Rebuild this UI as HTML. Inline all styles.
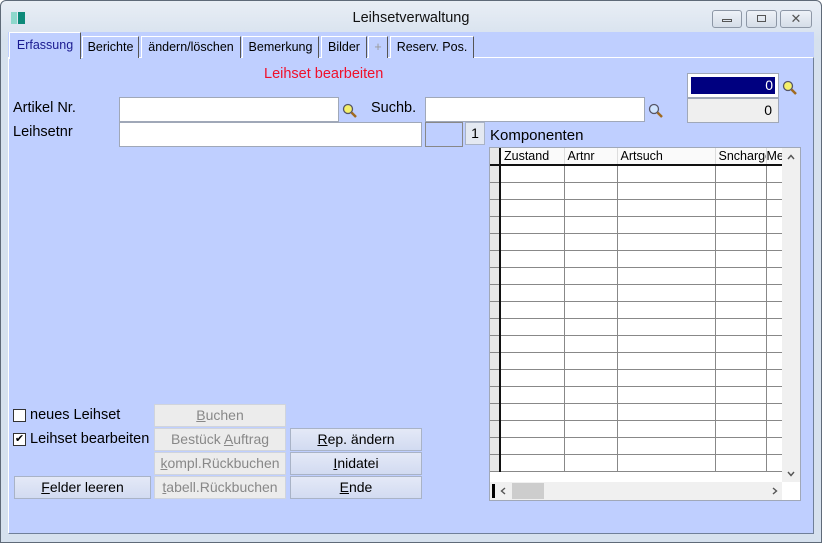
<!DOCTYPE html>
<html><head><meta charset="utf-8"><style>
*{box-sizing:border-box;margin:0;padding:0}
body{width:822px;height:543px;overflow:hidden;font-family:"Liberation Sans",Arial,sans-serif;font-size:13px;background:#fff;position:relative}
.win{position:absolute;left:0;top:0;width:822px;height:543px;background:linear-gradient(#e9eef5,#d6e1ee 40px,#d6e1ee);border:1px solid #5f6a78;border-radius:6px 6px 0 0}
.a{position:absolute}
.panel{left:8px;top:57px;width:806px;height:477px;background:#bfcfff;border:1px solid #6f7f99;border-top:1px solid #fff;border-left:1px solid #fff}
.tabsbg{left:8px;top:32px;width:806px;height:26px;background:#bfcfff}
.tab{position:absolute;top:36px;height:22px;background:#bfcfff;border:1px solid #fff;border-right:1px solid #555;border-bottom:none;font-size:12.5px;text-align:center;line-height:20px}
.inp{position:absolute;background:#fff;border:1px solid #a0a8b8}
.btn{position:absolute;height:23px;border:1px solid #a9b3c6;background:linear-gradient(#e4e9f7,#d2dbf1);text-align:center;line-height:21px;font-size:14px;color:#000}
.dis{background:#ececec;color:#888;border-color:#d0d4dc}
.wb{position:absolute;top:10px;height:18px;border:1px solid #8d97a6;border-radius:3px;background:linear-gradient(#eef2f8,#d5dde8)}
.lbl{position:absolute;font-size:14.5px}
.cb{position:absolute;width:13px;height:13px;border:1px solid #333;background:#fff;font-size:11px;line-height:11px;text-align:center}
.mag{position:absolute;width:16px;height:16px}
table{border-collapse:collapse;table-layout:fixed}
td{border-right:1px solid #888;border-bottom:1px solid #888;height:17px;padding:0}
</style></head><body>
<div class="win"></div>
<div class="a" style="left:11px;top:12px;width:6px;height:12px;background:#8ed8cc"></div>
<div class="a" style="left:18px;top:12px;width:7px;height:12px;background:#0d8a7a"></div>
<div class="a" style="left:0;top:10px;width:822px;text-align:center;font-size:14.5px;color:#111">Leihsetverwaltung</div>
<div class="wb" style="left:712px;width:30px"><div class="a" style="left:9px;top:8px;width:10px;height:3px;border:1px solid #555"></div></div>
<div class="wb" style="left:746px;width:31px"><div class="a" style="left:10px;top:4px;width:9px;height:7px;border:1px solid #555"></div></div>
<div class="wb" style="left:780px;width:32px;text-align:center;font-size:13px;line-height:16px;color:#555">✕</div>
<div class="a tabsbg"></div>
<div class="a panel"></div>
<div class="tab" style="left:9px;top:32px;height:27px;width:72px;border-bottom:none;color:#1a1a90;line-height:24px">Erfassung</div>
<div class="tab" style="left:82px;width:57px">Berichte</div>
<div class="tab" style="left:141px;width:100px">ändern/löschen</div>
<div class="tab" style="left:242px;width:77px">Bemerkung</div>
<div class="tab" style="left:321px;width:46px">Bilder</div>
<div class="tab" style="left:368px;width:20px;color:#999">+</div>
<div class="tab" style="left:390px;width:84px">Reserv. Pos.</div>
<div class="a" style="left:264px;top:66px;font-size:14.5px;color:#f0102a">Leihset bearbeiten</div>
<div class="lbl" style="left:13px;top:100px">Artikel Nr.</div>
<div class="inp" style="left:119px;top:97px;width:220px;height:25px"></div>
<svg class="mag" style="left:342px;top:103px" viewBox="0 0 16 16"><circle cx="6" cy="6" r="4.5" fill="#f4f06a" stroke="#556" stroke-width="1.3"/><path d="M9.5 9.5L14 14" stroke="#a06a20" stroke-width="2.5"/></svg>
<div class="lbl" style="left:371px;top:100px">Suchb.</div>
<div class="inp" style="left:425px;top:97px;width:220px;height:25px"></div>
<svg class="mag" style="left:648px;top:103px" viewBox="0 0 16 16"><circle cx="6" cy="6" r="4.5" fill="#cfe4ff" stroke="#556" stroke-width="1.3"/><path d="M9.5 9.5L14 14" stroke="#a06a20" stroke-width="2.5"/></svg>
<div class="lbl" style="left:13px;top:124px">Leihsetnr</div>
<div class="inp" style="left:119px;top:122px;width:303px;height:25px"></div>
<div class="a" style="left:425px;top:122px;width:38px;height:25px;border:1px solid #888;background:#bfcfff"></div>
<div class="a" style="left:465px;top:122px;width:20px;height:23px;border:1px solid #a9b3c6;background:#e4e9f2;text-align:center;line-height:21px;font-size:14px">1</div>
<div class="lbl" style="left:490px;top:127px;font-size:15px">Komponenten</div>
<div class="a" style="left:687px;top:73px;width:92px;height:25px;background:#fff;border:1px solid #a0a8b8"></div>
<div class="a" style="left:691px;top:77px;width:84px;height:17px;background:#000080;color:#fff;text-align:right;font-size:14px;line-height:17px;padding-right:2px">0</div>
<svg class="mag" style="left:782px;top:80px" viewBox="0 0 16 16"><circle cx="6" cy="6" r="4.5" fill="#f4f06a" stroke="#556" stroke-width="1.3"/><path d="M9.5 9.5L14 14" stroke="#a06a20" stroke-width="2.5"/></svg>
<div class="a" style="left:687px;top:98px;width:92px;height:25px;background:#efefef;border:1px solid #a0a8b8;text-align:right;font-size:14px;line-height:23px;padding-right:6px">0</div>
<!-- grid -->
<div class="a" style="left:489px;top:147px;width:312px;height:354px;background:#fff;border:1px solid #a0a8b8;overflow:hidden">
<table style="width:293px">
<colgroup><col style="width:10px"><col style="width:64px"><col style="width:53px"><col style="width:98px"><col style="width:51px"><col style="width:17px"></colgroup>
<tr style="background:#fafafa"><td style="background:#e8e8e8;border-bottom:2px solid #111;border-right:2px solid #111"></td><td style="border-bottom:2px solid #111;padding-left:3px;font-size:12.5px;border-right-color:#ddd">Zustand</td><td style="border-bottom:2px solid #111;padding-left:3px;font-size:12.5px;border-right-color:#ddd">Artnr</td><td style="border-bottom:2px solid #111;padding-left:3px;font-size:12.5px;border-right-color:#ddd">Artsuch</td><td style="border-bottom:2px solid #111;padding-left:3px;font-size:12.5px;white-space:nowrap;overflow:hidden;border-right-color:#ddd">Sncharge</td><td style="border-bottom:2px solid #111;font-size:12.5px;overflow:hidden;white-space:nowrap">Me</td></tr>
<tr><td style="background:#e8e8e8;border-right:2px solid #111"></td><td></td><td></td><td></td><td></td><td></td></tr>
<tr><td style="background:#e8e8e8;border-right:2px solid #111"></td><td></td><td></td><td></td><td></td><td></td></tr>
<tr><td style="background:#e8e8e8;border-right:2px solid #111"></td><td></td><td></td><td></td><td></td><td></td></tr>
<tr><td style="background:#e8e8e8;border-right:2px solid #111"></td><td></td><td></td><td></td><td></td><td></td></tr>
<tr><td style="background:#e8e8e8;border-right:2px solid #111"></td><td></td><td></td><td></td><td></td><td></td></tr>
<tr><td style="background:#e8e8e8;border-right:2px solid #111"></td><td></td><td></td><td></td><td></td><td></td></tr>
<tr><td style="background:#e8e8e8;border-right:2px solid #111"></td><td></td><td></td><td></td><td></td><td></td></tr>
<tr><td style="background:#e8e8e8;border-right:2px solid #111"></td><td></td><td></td><td></td><td></td><td></td></tr>
<tr><td style="background:#e8e8e8;border-right:2px solid #111"></td><td></td><td></td><td></td><td></td><td></td></tr>
<tr><td style="background:#e8e8e8;border-right:2px solid #111"></td><td></td><td></td><td></td><td></td><td></td></tr>
<tr><td style="background:#e8e8e8;border-right:2px solid #111"></td><td></td><td></td><td></td><td></td><td></td></tr>
<tr><td style="background:#e8e8e8;border-right:2px solid #111"></td><td></td><td></td><td></td><td></td><td></td></tr>
<tr><td style="background:#e8e8e8;border-right:2px solid #111"></td><td></td><td></td><td></td><td></td><td></td></tr>
<tr><td style="background:#e8e8e8;border-right:2px solid #111"></td><td></td><td></td><td></td><td></td><td></td></tr>
<tr><td style="background:#e8e8e8;border-right:2px solid #111"></td><td></td><td></td><td></td><td></td><td></td></tr>
<tr><td style="background:#e8e8e8;border-right:2px solid #111"></td><td></td><td></td><td></td><td></td><td></td></tr>
<tr><td style="background:#e8e8e8;border-right:2px solid #111"></td><td></td><td></td><td></td><td></td><td></td></tr>
<tr><td style="background:#e8e8e8;border-right:2px solid #111"></td><td></td><td></td><td></td><td></td><td></td></tr>
</table>
<div class="a" style="left:292px;top:0;width:18px;height:334px;background:#f0f0f0">
<svg class="a" style="left:5px;top:6px" width="8" height="6" viewBox="0 0 8 6"><path d="M1 5L4 1.5L7 5" stroke="#555" stroke-width="1.4" fill="none"/></svg>
<svg class="a" style="left:5px;top:323px" width="8" height="6" viewBox="0 0 8 6"><path d="M1 1L4 4.5L7 1" stroke="#555" stroke-width="1.4" fill="none"/></svg></div>
<div class="a" style="left:0;top:334px;width:292px;height:18px;background:#f0f0f0"></div>
<div class="a" style="left:2px;top:336px;width:3px;height:14px;background:#000"></div>
<div class="a" style="left:22px;top:335px;width:32px;height:16px;background:#cdcdcd"></div>
<svg class="a" style="left:10px;top:339px" width="6" height="8" viewBox="0 0 6 8"><path d="M5 1L1.5 4L5 7" stroke="#555" stroke-width="1.4" fill="none"/></svg>
<svg class="a" style="left:282px;top:339px" width="6" height="8" viewBox="0 0 6 8"><path d="M1 1L4.5 4L1 7" stroke="#555" stroke-width="1.4" fill="none"/></svg>
<div class="a" style="left:292px;top:334px;width:18px;height:18px;background:#fff"></div>
</div>
<!-- left controls -->
<div class="cb" style="left:13px;top:409px"></div>
<div class="lbl" style="left:30px;top:407px">neues Leihset</div>
<div class="cb" style="left:13px;top:433px">✔</div>
<div class="lbl" style="left:30px;top:431px">Leihset bearbeiten</div>
<div class="btn dis" style="left:154px;top:404px;width:132px"><u>B</u>uchen</div>
<div class="btn dis" style="left:154px;top:428px;width:132px">Bestück <u>A</u>uftrag</div>
<div class="btn" style="left:290px;top:428px;width:132px"><u>R</u>ep. ändern</div>
<div class="btn dis" style="left:154px;top:452px;width:132px"><u>k</u>ompl.Rückbuchen</div>
<div class="btn" style="left:290px;top:452px;width:132px"><u>I</u>nidatei</div>
<div class="btn" style="left:14px;top:476px;width:137px"><u>F</u>elder leeren</div>
<div class="btn dis" style="left:154px;top:476px;width:132px"><u>t</u>abell.Rückbuchen</div>
<div class="btn" style="left:290px;top:476px;width:132px"><u>E</u>nde</div>
</body></html>
